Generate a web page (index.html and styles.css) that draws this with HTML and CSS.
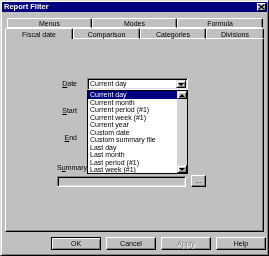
FILE: index.html
```html
<!DOCTYPE html>
<html lang="en">
<head>
    <meta charset="UTF-8">
    <title>Report Filter</title>
    <link rel="stylesheet" href="styles.css">
</head>
<body>

    <!-- Dialog window -->
    <div class="window">
        <div class="titlebar">
            <span class="title">Report Filter</span>
            <span class="close">
                <svg width="7" height="6" viewBox="0 0 7 6"><path d="M0.5 0.5 L6.5 5.5 M6.5 0.5 L0.5 5.5" stroke="#000" stroke-width="1.3"/></svg>
            </span>
        </div>

        <!-- Two rows of tabs -->
        <div class="tabs">
            <div class="tab-row back">
                <div class="tab" style="width: 85px">Menus</div>
                <div class="tab" style="width: 85px">Modes</div>
                <div class="tab" style="width: 86px">Formula</div>
            </div>
            <div class="tab-row front">
                <div class="tab active" style="width: 68px">Fiscal date</div>
                <div class="tab" style="width: 67px">Comparison</div>
                <div class="tab" style="width: 66px">Categories</div>
                <div class="tab" style="width: 58px">Divisions</div>
            </div>
        </div>

        <div class="panel">
            <div class="form">
                <label><u>D</u>ate</label>
                <div class="combo">
                    <span class="value">Current day</span>
                    <span class="drop-btn"><i class="arrow down"></i></span>

                    <!-- open list of the Date combo -->
                    <div class="droplist">
                        <ul class="items">
                            <li class="selected">Current day</li>
                            <li>Current month</li>
                            <li>Current period (#1)</li>
                            <li>Current week (#1)</li>
                            <li>Current year</li>
                            <li>Custom date</li>
                            <li>Custom summary file</li>
                            <li>Last day</li>
                            <li>Last month</li>
                            <li>Last period (#1)</li>
                            <li>Last week (#1)</li>
                        </ul>
                        <div class="scrollbar">
                            <span class="sb-btn"><i class="arrow up"></i></span>
                            <span class="sb-track"></span>
                            <span class="sb-btn"><i class="arrow down"></i></span>
                        </div>
                    </div>
                </div>

                <label><u>S</u>tart</label>
                <div class="combo">
                    <span class="value"></span>
                    <span class="drop-btn"><i class="arrow down"></i></span>
                </div>

                <label><u>E</u>nd</label>
                <div class="combo">
                    <span class="value"></span>
                    <span class="drop-btn"><i class="arrow down"></i></span>
                </div>
            </div>

            <div class="summary">
                <label>S<u>u</u>mmary</label>
                <div class="summary-row">
                    <div class="field"></div>
                    <button class="btn small">...</button>
                </div>
            </div>
        </div>

        <div class="buttons">
            <button class="btn default">OK</button>
            <button class="btn">Cancel</button>
            <button class="btn disabled">Apply</button>
            <button class="btn">Help</button>
        </div>
    </div>

</body>
</html>
```

FILE: styles.css
```css
body {
    margin: 0;
    background-color: #c0c0c0;
    font-family: "Liberation Sans", Arial, sans-serif;
    font-size: 7px;
    color: #000;
}
.window {
    width: 269px;
    height: 256px;
    box-sizing: border-box;
    border: 1px solid;
    border-color: #dfdfdf #000 #000 #dfdfdf;
    box-shadow: inset 1px 1px 0 #fff, inset -1px -1px 0 #808080;
    padding: 1px;
    position: relative;
    will-change: transform; /* gray text smoothing, no colour fringes */
}
.titlebar {
    height: 10px;
    background-color: #000080;
    color: #fff;
    display: flex;
    align-items: center;
    justify-content: space-between;
    padding: 0 1px 0 2px;
}
.title {
    font-weight: bold;
    font-size: 7.5px;
    line-height: 10px;
}
.close {
    width: 9px;
    height: 8px;
    background-color: #c0c0c0;
    border: 1px solid;
    border-color: #fff #000 #000 #fff;
    box-sizing: border-box;
    display: flex;
    align-items: center;
    justify-content: center;
}

/* tabs */
.tabs {
    margin-top: 6px;
}
.tab-row {
    display: flex;
}
.tab-row.back {
    padding-left: 5px;
    height: 10px;
}
.tab-row.front {
    padding-left: 3px;
    height: 11px;
}
.tab {
    box-sizing: border-box;
    border-top: 1px solid #fff;
    border-left: 1px solid #fff;
    border-right: 1px solid #000;
    box-shadow: inset -1px 0 0 #808080;
    border-radius: 2px 2px 0 0;
    text-align: center;
    line-height: 9px;
}
.tab-row.back .tab {
    border-bottom: 1px solid #fff;
}
.tab-row.front .tab {
    line-height: 10px;
    padding-top: 1px;
}
.tab-row.front .tab:not(.active) {
    border-bottom: 1px solid #fff;
}
.tab.active {
    line-height: 9px;
    padding-top: 0;
}

.panel {
    margin-left: 3px;
    width: 259px;
    height: 193px;
    box-sizing: border-box;
    border: 1px solid;
    border-color: #fff #000 #000 #fff;
    box-shadow: inset -1px -1px 0 #808080;
    border-top: none;
    padding-top: 1px;
}

/* date / start / end */
.form {
    display: grid;
    grid-template-columns: 20px 101px;
    column-gap: 10px;
    row-gap: 15px;
    padding: 38px 0 0 51px;
    align-items: center;
}
.form label {
    text-align: right;
    line-height: 8px;
}
.combo {
    position: relative;
    height: 12px;
    box-sizing: border-box;
    background-color: #fff;
    border: 1px solid;
    border-color: #808080 #fff #fff #808080;
    box-shadow: inset 1px 1px 0 #000, inset -1px -1px 0 #dfdfdf;
    display: flex;
    align-items: center;
}
.combo .value {
    flex: 1;
    padding-left: 2px;
    line-height: 8px;
}
.drop-btn, .sb-btn {
    width: 10px;
    height: 8px;
    box-sizing: border-box;
    background-color: #c0c0c0;
    border: 1px solid;
    border-color: #dfdfdf #000 #000 #dfdfdf;
    box-shadow: inset 1px 1px 0 #fff, inset -1px -1px 0 #808080;
    display: flex;
    align-items: center;
    justify-content: center;
    margin-right: 1px;
}
.arrow {
    width: 0;
    height: 0;
    border-left: 3px solid transparent;
    border-right: 3px solid transparent;
}
.arrow.down {
    border-top: 3px solid #000;
}
.arrow.up {
    border-bottom: 3px solid #000;
}

.droplist {
    position: absolute;
    top: 11px;
    left: -1px;
    width: 101px;
    height: 84px;
    box-sizing: border-box;
    border: 1px solid #000;
    background-color: #fff;
    display: flex;
    z-index: 2;
}
.items {
    flex: 1;
    list-style: none;
    margin: 0;
    padding: 0;
}
.items li {
    height: 7.5px;
    line-height: 8px;
    padding-left: 2px;
    white-space: nowrap;
    color: #000;
}
.items li.selected {
    background-color: #000080;
    color: #fff;
}
.scrollbar {
    width: 10px;
    display: flex;
    flex-direction: column;
}
.scrollbar .sb-btn {
    margin: 0;
}
.sb-track {
    flex: 1;
    background-color: #d4d4d4;
}

/* summary file */
.summary {
    padding: 20px 0 0 51px;
}
.summary label {
    display: block;
    line-height: 8px;
    margin-bottom: 3px;
}
.summary-row {
    display: flex;
    align-items: center;
}
.field {
    width: 129px;
    height: 11px;
    box-sizing: border-box;
    background-color: #c0c0c0;
    border: 1px solid;
    border-color: #808080 #fff #fff #808080;
    box-shadow: inset 1px 1px 0 #000, inset -1px -1px 0 #dfdfdf;
}

/* push buttons */
.btn {
    font-family: inherit;
    font-size: 7px;
    color: #000;
    background-color: #c0c0c0;
    box-sizing: border-box;
    width: 50px;
    height: 13px;
    padding: 0;
    border: 1px solid;
    border-color: #fff #000 #000 #fff;
    box-shadow: inset -1px -1px 0 #808080;
    line-height: 10px;
}
.btn.small {
    width: 15px;
    height: 12px;
    margin-left: 5px;
    line-height: 6px;
}
.btn.default {
    border: 1px solid #000;
    box-shadow: inset 1px 1px 0 #fff, inset -1px -1px 0 #808080;
}
.btn.disabled {
    color: #808080;
    text-shadow: 1px 1px 0 #fff;
}
.buttons {
    display: flex;
    justify-content: flex-end;
    gap: 5px;
    margin-top: 5px;
    padding-right: 1px;
}
```
